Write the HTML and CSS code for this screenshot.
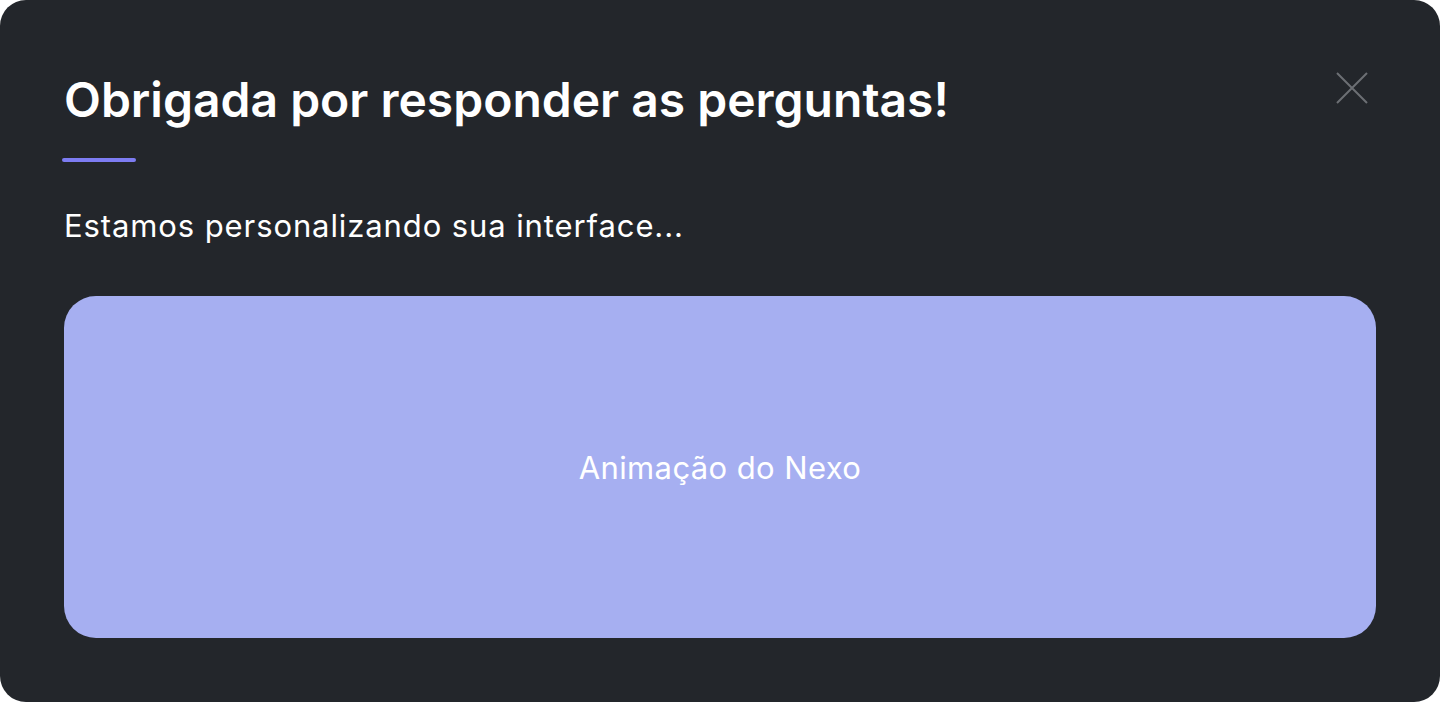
FILE: index.html
```html
<!DOCTYPE html>
<html lang="pt-BR">
<head>
<meta charset="utf-8">
<link rel="stylesheet" href="styles.css">
</head>
<body>
<div class="modal">
  <div class="header">
    <h1 class="title">Obrigada por responder as perguntas!</h1>
    <button class="close" aria-label="Fechar">
      <svg width="32" height="32" viewBox="0 0 32 32"><path d="M1 1L31 31M31 1L1 31" stroke="#6c6f74" stroke-width="2" fill="none"/></svg>
    </button>
  </div>
  <div class="accent"></div>
  <p class="subtitle">Estamos personalizando sua interface...</p>
  <div class="animation">Animação do Nexo</div>
</div>
</body>
</html>
```
FILE: styles.css
```css
html, body { margin: 0; padding: 0; background: #ffffff; }
body { font-family: Inter, "Noto Sans", sans-serif; }
.modal {
  box-sizing: border-box;
  width: 1440px;
  height: 702px;
  background: #23262b;
  border-radius: 26px;
  padding: 64px 64px 64px 64px;
  display: flex;
  flex-direction: column;
}
.header { display: flex; justify-content: space-between; align-items: flex-start; }
.title {
  margin: 0;
  color: #ffffff;
  font-size: 48px;
  font-weight: 600;
  line-height: 72px;
  letter-spacing: 0;
}
.close {
  background: none; border: 0; padding: 0; margin: 8px 8px 0 0;
  width: 32px; height: 32px; cursor: pointer;
}
.accent {
  width: 74px; height: 4px; border-radius: 2px; background: #7d7cf2;
  margin: 22px 0 0 -2px;
}
.subtitle {
  margin: 42px 0 0;
  color: #ffffff;
  font-size: 31px;
  line-height: 44px;
  font-weight: 400;
  letter-spacing: 0.9px;
}
.animation {
  margin-top: 48px;
  height: 342px;
  border-radius: 32px;
  background: #a6aff1;
  color: #ffffff;
  font-size: 31px;
  letter-spacing: 0.4px;
  display: flex;
  align-items: center;
  justify-content: center;
}
```
